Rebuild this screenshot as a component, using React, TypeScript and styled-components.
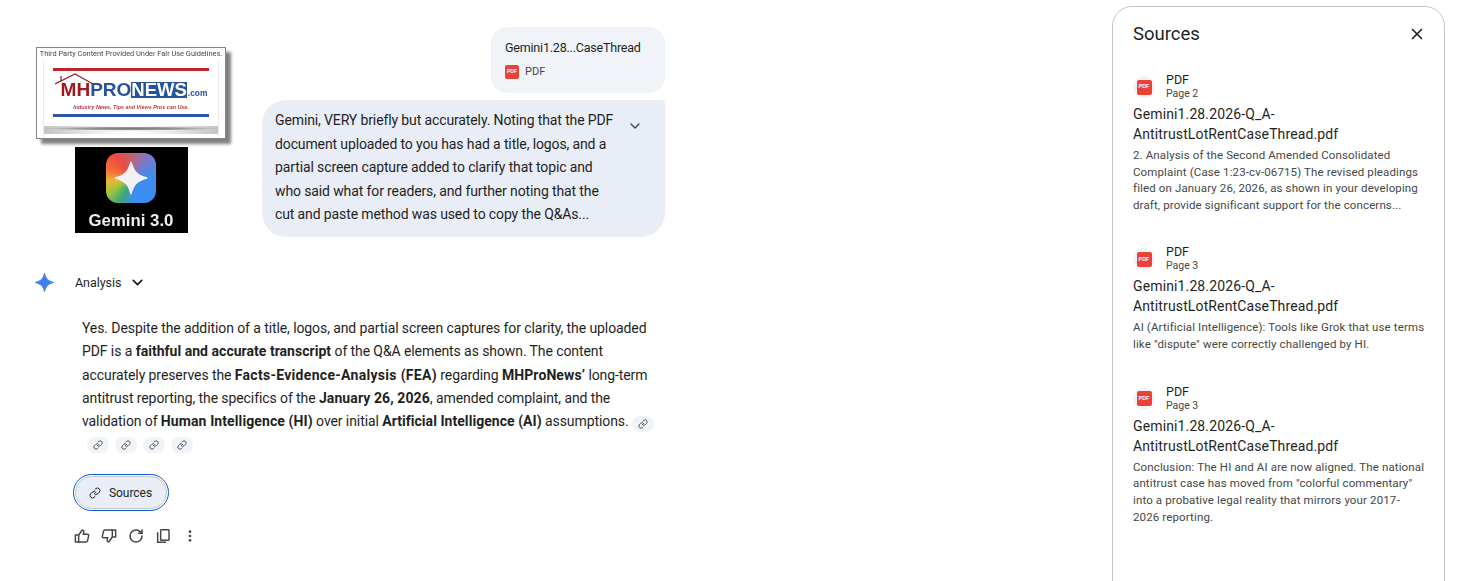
import styled, { createGlobalStyle } from 'styled-components';
import { Link, RotateCw, ChevronDown, X } from 'lucide-react';

const Global = createGlobalStyle`
  html, body { margin: 0; padding: 0; background: #fff; height: 100%; overflow: hidden; }
  * { box-sizing: border-box; }
  body { font-family: Roboto, "Noto Sans", sans-serif; color: #1f1f1f; }
`;

const Page = styled.div`
  width: 1457px;
  height: 581px;
  display: flex;
  justify-content: space-between;
  overflow: hidden;
  padding: 6px 12px 0 30px;
`;

const Chat = styled.div`
  width: 635px;
  display: flex;
  flex-direction: column;
  padding-top: 21px;
`;

const Upload = styled.div`
  display: flex;
  justify-content: space-between;
  align-items: flex-start;
`;

const Pictures = styled.div`
  display: flex;
  flex-direction: column;
  align-items: center;
  width: 190px;
  margin: 20px 0 0 6px;
  gap: 8px;
`;

const LogoCard = styled.div`
  width: 190px;
  height: 92px;
  background: #fff;
  border: 1px solid #858585;
  box-shadow: 5px 5px 3px #808080;
  display: flex;
  flex-direction: column;
  align-items: center;
  overflow: hidden;
  filter: blur(0.25px);
`;

const Fair = styled.div`
  font-size: 7.4px;
  line-height: 12px;
  color: #444;
  white-space: nowrap;
`;

const LogoInner = styled.div`
  width: 176px;
  flex: 1;
  display: flex;
  flex-direction: column;
  align-items: center;
  border-left: 1px solid #ececec;
  border-right: 1px solid #ececec;
`;

const Rule = styled.div<{ $color: string; $top: number }>`
  width: 156px;
  height: 3px;
  background: ${p => p.$color};
  margin-top: ${p => p.$top}px;
  flex: none;
`;

const Brand = styled.div`
  display: flex;
  align-items: center;
  position: relative;
  font-family: "Liberation Sans", sans-serif;
  font-weight: 700;
  font-size: 19px;
  line-height: 16px;
  margin: 11px 0 0 6px;
  height: 16px;
`;

const Roof = styled.svg`
  position: absolute;
  left: -6px;
  top: -9px;
`;

const Red = styled.span`color: #a3171f;`;
const Blue = styled.span`color: #2a4f9e;`;
const NewsBox = styled.span`
  background: #25539e;
  color: #fff;
  height: 16px;
  font-size: 18.5px;
`;
const Dot = styled.span`
  color: #2a4f9e;
  font-size: 8.4px;
  line-height: 10px;
  margin: 5px 0 0 1px;
`;

const Tag = styled.div`
  font-family: "Liberation Sans", sans-serif;
  font-size: 5.4px;
  font-style: italic;
  font-weight: 700;
  color: #b83a44;
  line-height: 10px;
  margin-top: 4px;
  white-space: nowrap;
`;

const Strip = styled.div`
  width: 100%;
  height: 8px;
  margin-top: 9px;
  flex: none;
  background: radial-gradient(ellipse 50% 26% at 50% 32%, #777 0%, #9a9a9a 60%, transparent 100%),
    linear-gradient(90deg, #c4c4c4, #ededed 30%, #fff 50%, #ededed 70%, #c4c4c4);
`;

const GeminiCard = styled.div`
  width: 113px;
  height: 86px;
  background: #000;
  display: flex;
  flex-direction: column;
  align-items: center;
  padding-top: 6px;
  filter: blur(0.25px);
`;

const AppIcon = styled.div`
  width: 50px;
  height: 50px;
  border-radius: 12px;
  background: conic-gradient(
    #c4606f 0deg,
    #7d79c9 40deg,
    #3d8cef 85deg,
    #3a8df0 170deg,
    #3ea77a 205deg,
    #9cc43c 235deg,
    #e9b73a 262deg,
    #ef6f3b 290deg,
    #ee4b3f 325deg,
    #c4606f 360deg
  );
  display: flex;
  align-items: center;
  justify-content: center;
`;

const GeminiLabel = styled.div`
  color: #eee;
  font-family: "Liberation Sans", sans-serif;
  font-weight: 700;
  font-size: 16.8px;
  line-height: 20px;
  margin-top: 8px;
`;

const Bubbles = styled.div`
  display: flex;
  flex-direction: column;
  align-items: flex-end;
  gap: 7px;
`;

const FileBubble = styled.div`
  width: 174px;
  height: 66px;
  background: #f0f4f9;
  border-radius: 16px;
  padding: 12px 14px;
`;

const FileName = styled.div`
  font-size: 12.5px;
  line-height: 17px;
  letter-spacing: -0.2px;
  color: #1f1f1f;
  white-space: nowrap;
`;

const FileType = styled.div`
  display: flex;
  align-items: center;
  gap: 6px;
  margin-top: 9px;
  font-size: 11px;
  line-height: 14px;
  color: #444746;
`;

const PdfMark = styled.span<{ $size: number }>`
  width: ${p => p.$size}px;
  height: ${p => p.$size}px;
  background: #ea4335;
  border-radius: 2px;
  color: #fff;
  display: flex;
  align-items: center;
  justify-content: center;
  font-family: "Liberation Sans", sans-serif;
  font-weight: 700;
  font-size: ${p => p.$size * 0.36}px;
  line-height: 1;
`;

const Prompt = styled.div`
  width: 403px;
  height: 137px;
  background: #e9eef6;
  border-radius: 24px 4px 24px 24px;
  padding: 9px 60px 0 13px;
  font-size: 14px;
  line-height: 23.5px;
  letter-spacing: -0.12px;
  color: #1f1f1f;
  position: relative;
  white-space: nowrap;
`;

const Expand = styled.span`
  position: absolute;
  top: 18px;
  right: 22px;
  display: flex;
  color: #444746;
`;

const Answer = styled.div`
  margin-top: 36px;
`;

const AnswerHead = styled.div`
  display: flex;
  align-items: center;
  padding-left: 4px;
  height: 19px;
  font-size: 12.5px;
  letter-spacing: -0.05px;
`;

const StarSlot = styled.span`
  width: 41px;
  display: flex;
`;

const HeadChevron = styled.span`
  display: flex;
  margin-left: 8px;
  color: #1f1f1f;
`;

const Body = styled.div`
  margin: 25px 0 0 52px;
  width: 580px;
  font-size: 14px;
  line-height: 23.25px;
  letter-spacing: -0.09px;
  color: #1f1f1f;
  white-space: nowrap;
`;

const Strong = styled.b<{ $track: number }>`
  font-weight: 700;
  letter-spacing: ${p => p.$track}px;
`;

const Chip = styled.span`
  display: inline-flex;
  align-items: center;
  justify-content: center;
  width: 22px;
  height: 16px;
  border-radius: 8px;
  background: #f0f4f9;
  color: #444746;
  vertical-align: -3px;
`;

const ChipRow = styled.div`
  display: flex;
  gap: 6px;
  margin: 0 0 0 5px;
  height: 24px;
  align-items: center;
`;

const SourcesOuter = styled.div`
  margin: 17px 0 0 43px;
  width: 96px;
  height: 37px;
  border: 1.5px solid #0b57d0;
  border-radius: 19px;
  padding: 1px;
`;

const SourcesButton = styled.div`
  height: 100%;
  border: 1px solid #c4c7c5;
  border-radius: 17px;
  background: #e9eef6;
  display: flex;
  align-items: center;
  justify-content: center;
  gap: 8px;
  font-size: 12px;
  letter-spacing: -0.03px;
  color: #1f1f1f;
  padding-right: 1px;
`;

const Actions = styled.div`
  display: flex;
  align-items: center;
  gap: 11px;
  margin: 17px 0 0 44px;
  color: #444746;
`;

const Panel = styled.aside`
  width: 333px;
  height: 600px;
  border: 1px solid #c4c7c5;
  border-radius: 20px;
  padding: 0 20px;
`;

const PanelHead = styled.div`
  display: flex;
  justify-content: space-between;
  align-items: center;
  height: 54px;
  font-size: 18.5px;
  color: #1f1f1f;
`;

const Close = styled.span`
  display: flex;
  color: #1f1f1f;
  margin-right: -2px;
`;

const SourceList = styled.div`
  display: flex;
  flex-direction: column;
  margin-top: 12px;
`;

const SourceItem = styled.div<{ $gap: number }>`
  margin-bottom: ${p => p.$gap}px;
`;

const SourceHead = styled.div`
  display: flex;
  align-items: center;
  gap: 11px;
`;

const Disc = styled.span`
  width: 22px;
  height: 22px;
  border-radius: 50%;
  background: #f0f4f9;
  display: flex;
  align-items: center;
  justify-content: center;
`;

const Kind = styled.div`
  font-size: 12.5px;
  line-height: 14px;
  color: #1f1f1f;
`;

const PageNo = styled.div`
  font-size: 10.5px;
  line-height: 14px;
  color: #444746;
`;

const SourceTitle = styled.div`
  font-size: 14px;
  line-height: 20px;
  letter-spacing: 0.13px;
  color: #1f1f1f;
  margin-top: 3px;
`;

const Snippet = styled.div`
  font-size: 11.5px;
  line-height: 16.7px;
  letter-spacing: 0.13px;
  color: #444746;
  margin-top: 3px;
  white-space: nowrap;
`;

const Star = ({ size, color }: { size: number; color: string }) => (
  <svg width={size} height={size} viewBox="0 0 24 24">
    <path
      fill={color}
      stroke={color}
      strokeWidth={1}
      strokeLinejoin="round"
      d="M12 1.500C13.600 7.800 16.200 10.400 22.500 12C16.200 13.600 13.600 16.200 12 22.500C10.400 16.200 7.800 13.600 1.500 12C7.800 10.400 10.400 7.800 12 1.500Z"
    />
  </svg>
);

const ThumbUp = () => (
  <svg width={16} height={16} viewBox="0 0 24 24" fill="none" stroke="currentColor" strokeWidth={2.2} strokeLinejoin="round">
    <path d="M2 10.5h5V21H2z" />
    <path d="M7 10.5L12.5 3c1.6.2 2.5 1.3 2.2 2.8L14 9.5h6.2c1.3 0 2.1 1.1 1.8 2.3l-1.8 7.4c-.2 1.1-1.1 1.8-2.2 1.8H7" />
  </svg>
);

const ThumbDown = () => (
  <svg width={16} height={16} viewBox="0 0 24 24" fill="none" stroke="currentColor" strokeWidth={2.2} strokeLinejoin="round">
    <path d="M22 13.5h-5V3h5z" />
    <path d="M17 13.5L11.5 21c-1.6-.2-2.5-1.3-2.2-2.8l.7-3.7H3.800c-1.3 0-2.100-1.100-1.800-2.300l1.800-7.400C4 3.700 4.900 3 6 3h11" />
  </svg>
);

const CopyIcon = () => (
  <svg width={16} height={16} viewBox="0 0 24 24" fill="none" stroke="currentColor" strokeWidth={2.2}>
    <rect x="8.500" y="2.500" width="12.500" height="16" rx="1" />
    <path d="M4 6.500V21.500H16.500" />
  </svg>
);

const Dots = () => (
  <svg width={16} height={16} viewBox="0 0 24 24" fill="currentColor">
    <circle cx="12" cy="5.500" r="2" />
    <circle cx="12" cy="12" r="2" />
    <circle cx="12" cy="18.500" r="2" />
  </svg>
);

const sources = [
  {
    page: 'Page 2',
    gap: 31.5,
    text: [
      '2. Analysis of the Second Amended Consolidated',
      'Complaint (Case 1:23-cv-06715) The revised pleadings',
      'filed on January 26, 2026, as shown in your developing',
      'draft, provide significant support for the concerns...',
    ],
  },
  {
    page: 'Page 3',
    gap: 32,
    text: ['AI (Artificial Intelligence): Tools like Grok that use terms', 'like "dispute" were correctly challenged by HI.'],
  },
  {
    page: 'Page 3',
    gap: 0,
    text: [
      'Conclusion: The HI and AI are now aligned. The national',
      'antitrust case has moved from "colorful commentary"',
      'into a probative legal reality that mirrors your 2017-',
      '2026 reporting.',
    ],
  },
];

export default function App() {
  return (
    <Page>
      <Global />
      <Chat>
        <Upload>
          <Pictures>
            <LogoCard>
              <Fair>Third Party Content Provided Under Fair Use Guidelines.</Fair>
              <LogoInner>
                <Rule $color="#c0262d" $top={8} />
                <Brand>
                  <Roof width="40" height="13" viewBox="0 0 40 13" fill="none" stroke="#a3171f" strokeWidth="1.200">
                    <path d="M0 11L20 1L38 11" />
                    <path d="M6 3v5" />
                  </Roof>
                  <Red>MH</Red>
                  <Blue>PRO</Blue>
                  <NewsBox>NEWS</NewsBox>
                  <Dot>.com</Dot>
                </Brand>
                <Tag>Industry News, Tips and Views Pros can Use.</Tag>
                <Rule $color="#2b55a5" $top={2} />
                <Strip />
              </LogoInner>
            </LogoCard>
            <GeminiCard>
              <AppIcon>
                <Star size={36} color="#f2f2f5" />
              </AppIcon>
              <GeminiLabel>Gemini 3.0</GeminiLabel>
            </GeminiCard>
          </Pictures>
          <Bubbles>
            <FileBubble>
              <FileName>Gemini1.28...CaseThread</FileName>
              <FileType>
                <PdfMark $size={14}>PDF</PdfMark>
                PDF
              </FileType>
            </FileBubble>
            <Prompt>
              Gemini, VERY briefly but accurately. Noting that the PDF
              <br />
              document uploaded to you has had a title, logos, and a
              <br />
              partial screen capture added to clarify that topic and
              <br />
              who said what for readers, and further noting that the
              <br />
              cut and paste method was used to copy the Q&amp;As...
              <Expand>
                <ChevronDown size={16} />
              </Expand>
            </Prompt>
          </Bubbles>
        </Upload>
        <Answer>
          <AnswerHead>
            <StarSlot>
              <Star size={21} color="#3f7fec" />
            </StarSlot>
            Analysis
            <HeadChevron>
              <ChevronDown size={17} strokeWidth={2.4} />
            </HeadChevron>
          </AnswerHead>
          <Body>
            Yes. Despite the addition of a title, logos, and partial screen captures for clarity, the uploaded
            <br />
            PDF is a <Strong $track={0.03}>faithful and accurate transcript</Strong> of the Q&amp;A elements as shown. The content
            <br />
            accurately preserves the <Strong $track={0.3}>Facts-Evidence-Analysis (FEA)</Strong> regarding{' '}
            <Strong $track={0.1}>MHProNews’</Strong> long-term
            <br />
            antitrust reporting, the specifics of the <Strong $track={0.1}>January 26, 2026</Strong>, amended complaint, and the
            <br />
            validation of <Strong $track={0.1}>Human Intelligence (HI)</Strong> over initial{' '}
            <Strong $track={0.05}>Artificial Intelligence (AI)</Strong> assumptions.{' '}
            <Chip>
              <Link size={10} strokeWidth={2.2} />
            </Chip>
            <ChipRow>
              {[0, 1, 2, 3].map(i => (
                <Chip key={i}>
                  <Link size={10} strokeWidth={2.2} />
                </Chip>
              ))}
            </ChipRow>
          </Body>
          <SourcesOuter>
            <SourcesButton>
              <Link size={12} strokeWidth={2} />
              Sources
            </SourcesButton>
          </SourcesOuter>
          <Actions>
            <ThumbUp />
            <ThumbDown />
            <RotateCw size={16} strokeWidth={2.3} />
            <CopyIcon />
            <Dots />
          </Actions>
        </Answer>
      </Chat>
      <Panel>
        <PanelHead>
          Sources
          <Close>
            <X size={18} strokeWidth={2.2} />
          </Close>
        </PanelHead>
        <SourceList>
          {sources.map((s, i) => (
            <SourceItem key={i} $gap={s.gap}>
              <SourceHead>
                <Disc>
                  <PdfMark $size={15}>PDF</PdfMark>
                </Disc>
                <div>
                  <Kind>PDF</Kind>
                  <PageNo>{s.page}</PageNo>
                </div>
              </SourceHead>
              <SourceTitle>
                Gemini1.28.2026-Q_A-
                <br />
                AntitrustLotRentCaseThread.pdf
              </SourceTitle>
              <Snippet>
                {s.text.map((t, j) => (
                  <div key={j}>{t}</div>
                ))}
              </Snippet>
            </SourceItem>
          ))}
        </SourceList>
      </Panel>
    </Page>
  );
}
